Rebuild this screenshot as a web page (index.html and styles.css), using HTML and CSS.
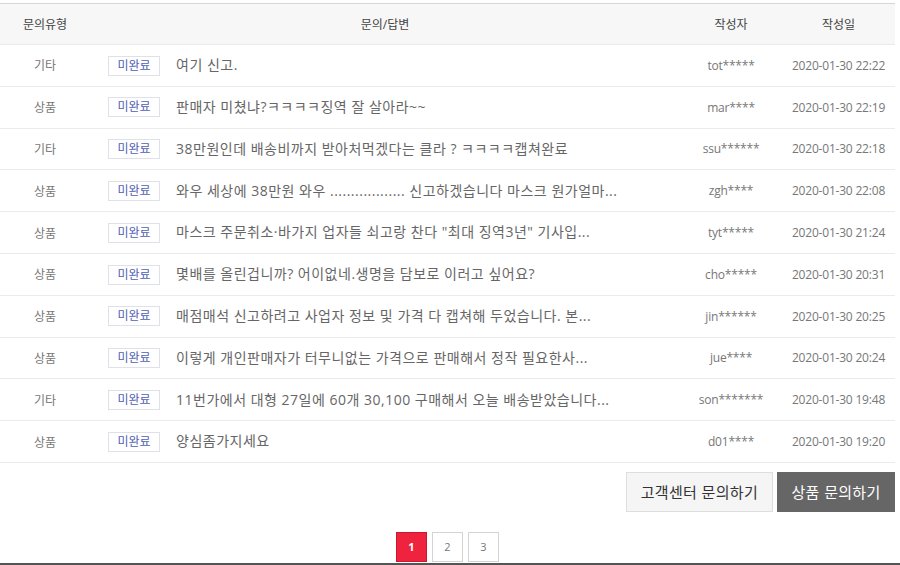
FILE: index.html
```html
<!DOCTYPE html>
<html lang="ko">
<head>
  <meta charset="UTF-8">
  <title>상품 문의</title>
  <link rel="stylesheet" href="styles.css">
</head>
<body>
  <div class="board">
    <table class="qna">
      <colgroup>
        <col class="c-type">
        <col class="c-title">
        <col class="c-writer">
        <col class="c-date">
      </colgroup>
      <thead>
        <tr>
          <th>문의유형</th>
          <th>문의/답변</th>
          <th>작성자</th>
          <th>작성일</th>
        </tr>
      </thead>
      <tbody>
        <tr><td>기타</td><td class="subject"><span class="state">미완료</span>여기 신고.</td><td class="meta">tot*****</td><td class="meta">2020-01-30 22:22</td></tr>
        <tr><td>상품</td><td class="subject"><span class="state">미완료</span>판매자 미쳤냐?ㅋㅋㅋㅋ징역 잘 살아라~~</td><td class="meta">mar****</td><td class="meta">2020-01-30 22:19</td></tr>
        <tr><td>기타</td><td class="subject"><span class="state">미완료</span>38만원인데 배송비까지 받아처먹겠다는 클라 ? ㅋㅋㅋㅋ캡쳐완료</td><td class="meta">ssu******</td><td class="meta">2020-01-30 22:18</td></tr>
        <tr><td>상품</td><td class="subject"><span class="state">미완료</span>와우 세상에 38만원 와우 .................. 신고하겠습니다 마스크 원가얼마...</td><td class="meta">zgh****</td><td class="meta">2020-01-30 22:08</td></tr>
        <tr><td>상품</td><td class="subject"><span class="state">미완료</span>마스크 주문취소·바가지 업자들 쇠고랑 찬다 "최대 징역3년" 기사입...</td><td class="meta">tyt*****</td><td class="meta">2020-01-30 21:24</td></tr>
        <tr><td>상품</td><td class="subject"><span class="state">미완료</span>몇배를 올린겁니까? 어이없네.생명을 담보로 이러고 싶어요?</td><td class="meta">cho*****</td><td class="meta">2020-01-30 20:31</td></tr>
        <tr><td>상품</td><td class="subject"><span class="state">미완료</span>매점매석 신고하려고 사업자 정보 및 가격 다 캡쳐해 두었습니다. 본...</td><td class="meta">jin******</td><td class="meta">2020-01-30 20:25</td></tr>
        <tr><td>상품</td><td class="subject"><span class="state">미완료</span>이렇게 개인판매자가 터무니없는 가격으로 판매해서 정작 필요한사...</td><td class="meta">jue****</td><td class="meta">2020-01-30 20:24</td></tr>
        <tr><td>기타</td><td class="subject"><span class="state">미완료</span>11번가에서 대형 27일에 60개 30,100 구매해서 오늘 배송받았습니다...</td><td class="meta">son*******</td><td class="meta">2020-01-30 19:48</td></tr>
        <tr><td>상품</td><td class="subject"><span class="state">미완료</span>양심좀가지세요</td><td class="meta">d01****</td><td class="meta">2020-01-30 19:20</td></tr>
      </tbody>
    </table>

    <div class="actions">
      <button class="btn">고객센터 문의하기</button>
      <button class="btn dark">상품 문의하기</button>
    </div>

    <div class="paging">
      <a class="on">1</a>
      <a>2</a>
      <a>3</a>
    </div>
  </div>
  <div class="bottom-line"></div>
</body>
</html>
```

FILE: styles.css
```css
* {
  margin: 0;
  padding: 0;
  box-sizing: border-box;
}

body {
  font-family: 'Open Sans', 'Noto Sans CJK KR', sans-serif;
  color: #666;
  background: #fff;
  width: 900px;
  height: 565px;
  overflow: hidden;
}

.board {
  width: 895px;
  padding-top: 3px;
}

.qna {
  width: 100%;
  border-collapse: collapse;
  table-layout: fixed;
  border-top: 1px solid #d6d6d6;
}

.c-type { width: 90px; }
.c-writer { width: 102px; }
.c-date { width: 113px; }

.qna th {
  height: 41px;
  background: #f7f7f7;
  font-size: 12px;
  font-weight: normal;
  color: #444;
  text-align: center;
  border-bottom: 1px solid #ebebeb;
}

.qna td {
  height: 41.8px;
  font-size: 12px;
  color: #777;
  text-align: center;
  border-bottom: 1px solid #ebebeb;
  white-space: nowrap;
  overflow: hidden;
}

.qna td.subject {
  text-align: left;
  padding-left: 18px;
  font-size: 14px;
  letter-spacing: 0.5px;
  color: #666;
}

.qna td.meta {
  color: #777;
  letter-spacing: -0.2px;
}

.state {
  display: inline-block;
  width: 52px;
  height: 20px;
  line-height: 18px;
  margin-right: 16px;
  border: 1px solid #dfe1ea;
  font-size: 12px;
  letter-spacing: 0;
  color: #5060b4;
  text-align: center;
  vertical-align: middle;
  position: relative;
  top: -1px;
}

.actions {
  display: flex;
  justify-content: flex-end;
  gap: 4px;
  margin-top: 9px;
}

.btn {
  height: 40px;
  padding: 0 14px;
  border: 1px solid #dedede;
  background: #f5f5f5;
  color: #333;
  font-family: 'Noto Sans CJK KR', sans-serif;
  font-size: 15px;
  letter-spacing: 0.3px;
  cursor: pointer;
}

.btn.dark {
  width: 118px;
  padding: 0;
  background: #666;
  border-color: #666;
  color: #fff;
}

.paging {
  display: flex;
  justify-content: center;
  gap: 5px;
  margin-top: 20px;
}

.paging a {
  width: 31px;
  height: 30px;
  line-height: 28px;
  border: 1px solid #d4d4d4;
  background: #fff;
  color: #777;
  font-size: 11px;
  text-align: center;
}

.paging a.on {
  background: #f0233f;
  border-color: #c7182f;
  color: #fff;
  font-weight: bold;
}

.bottom-line {
  position: absolute;
  left: 0;
  top: 563px;
  width: 900px;
  height: 2px;
  background: #555;
}
```
